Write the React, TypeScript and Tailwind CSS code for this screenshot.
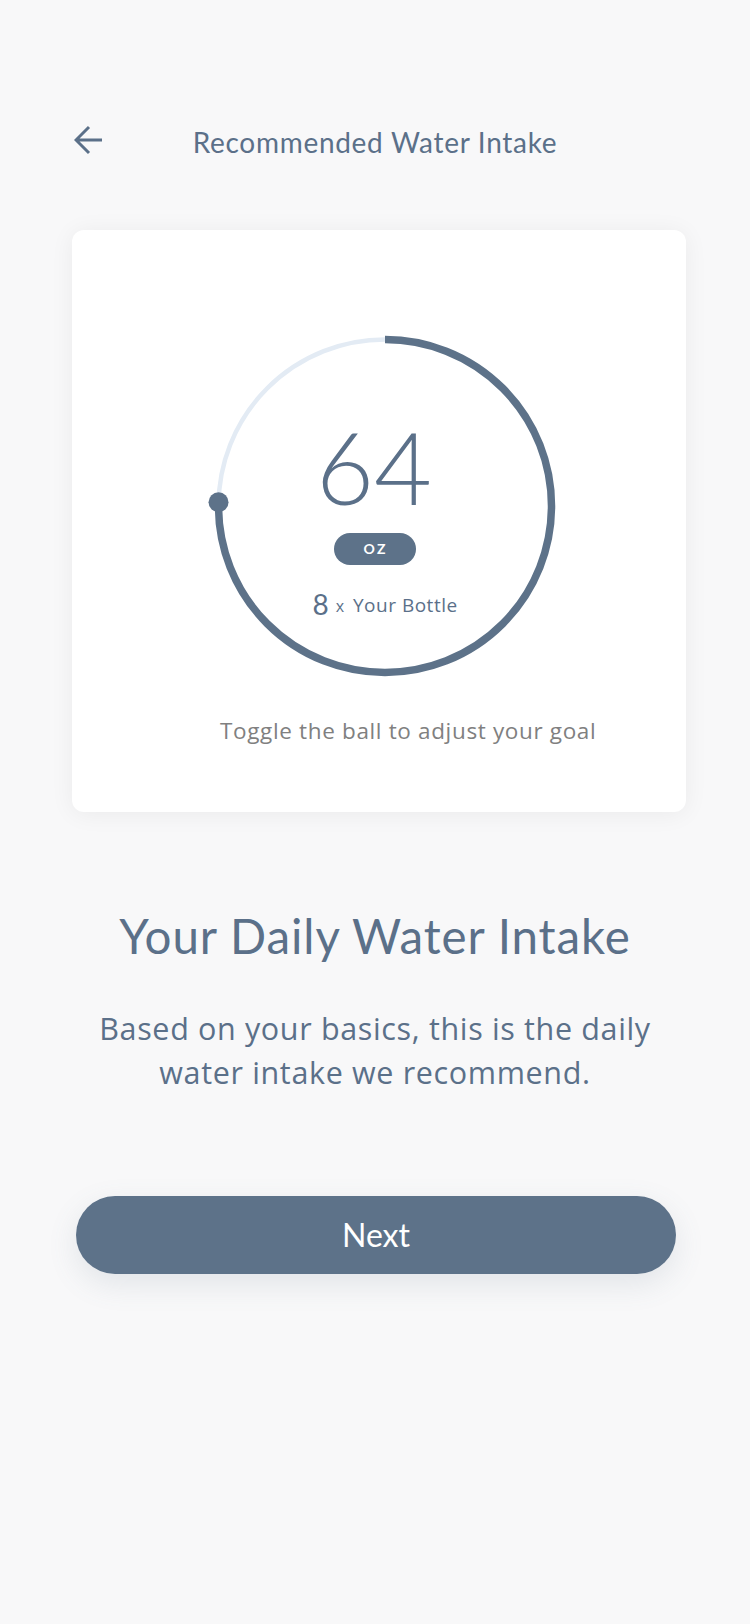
import React from "react";

const R = 166.5;
const C = 2 * Math.PI * R;
const PROGRESS = 0.7536;

function Ring() {
  const ang = (271.3 - 90) * (Math.PI / 180);
  const kx = 180 + R * Math.cos(ang);
  const ky = 180 + R * Math.sin(ang);
  return (
    <svg width="360" height="360" viewBox="0 0 360 360" className="absolute inset-0">
      <circle cx="180" cy="180" r={R} fill="none" stroke="#e3ebf4" strokeWidth="4.5" />
      <circle
        cx="180"
        cy="180"
        r={R}
        fill="none"
        stroke="#5d7289"
        strokeWidth="7.5"
        strokeDasharray={`${PROGRESS * C} ${C}`}
        transform="rotate(-90 180 180)"
      />
      <circle cx={kx} cy={ky} r="10" fill="#5d7289" />
    </svg>
  );
}

export default function App() {
  return (
    <div className="min-h-[1624px] w-[750px] bg-[#f8f8f9] flex flex-col font-['Lato',sans-serif] text-[#5b7089]">
      {/* Header */}
      <div className="mt-[122px] grid grid-cols-[1fr_auto_1fr] items-center h-[40px]">
        <div className="pl-[74px] flex items-center">
          <svg width="30" height="30" viewBox="0 0 30 30" className="mb-[4px]">
            <path d="M2 15 H28 M15 2 L2 15 L15 28" fill="none" stroke="#5b7089" strokeWidth="3" strokeLinejoin="miter" />
          </svg>
        </div>
        <h1 className="text-[28px] leading-[40px] font-normal tracking-[0.7px]">Recommended Water Intake</h1>
        <div />
      </div>

      {/* Card */}
      <div className="mt-[68px] ml-[72px] w-[614px] h-[582px] bg-white rounded-[12px] shadow-[0_2px_24px_rgba(0,0,0,0.06)] flex flex-col items-start">
        <div className="mt-[96px] ml-[133px] relative w-[360px] h-[360px]">
          <Ring />
          <div className="absolute inset-0 flex flex-col items-center">
            <div className="mt-[90px] mr-[22px] text-[100px] leading-[100px] font-light text-[#5b7089]">64</div>
            <div className="mt-[17px] mr-[21px] w-[82px] h-[32px] rounded-full bg-[#5d7289] flex items-center justify-center">
              <span className="text-white text-[14px] font-bold tracking-[0.18em] pl-[0.18em] leading-none">OZ</span>
            </div>
            <div className="mt-[23px] flex items-baseline">
              <span className="text-[28px] leading-[26px] font-normal translate-y-[3px]">8</span>
              <span className="ml-[7px] font-['Open_Sans',sans-serif] text-[16px] leading-[26px]">x</span>
              <span className="ml-[9px] font-['Open_Sans',sans-serif] text-[19px] leading-[26px] tracking-[0.5px]">Your Bottle</span>
            </div>
          </div>
        </div>
        <p className="mt-[31px] ml-[148px] font-['Open_Sans',sans-serif] text-[22.5px] leading-[28px] tracking-[0.65px] text-[#808080] whitespace-nowrap">
          Toggle the ball to adjust your goal
        </p>
      </div>

      {/* Heading */}
      <h2 className="mt-[96px] text-center text-[47.5px] leading-[56px] font-normal tracking-[0.9px]">Your Daily Water Intake</h2>
      <p className="mt-[42px] text-center font-['Open_Sans',sans-serif] text-[30.5px] leading-[44px] tracking-[0.65px]">
        Based on your basics, this is the daily
        <br />
        water intake we recommend.
      </p>

      {/* Button */}
      <button className="mt-[102px] ml-[76px] w-[600px] h-[78px] rounded-full bg-[#5d7289] text-white text-[32px] shadow-[0_10px_30px_rgba(93,114,137,0.14)] flex items-center justify-center">
        Next
      </button>
    </div>
  );
}
